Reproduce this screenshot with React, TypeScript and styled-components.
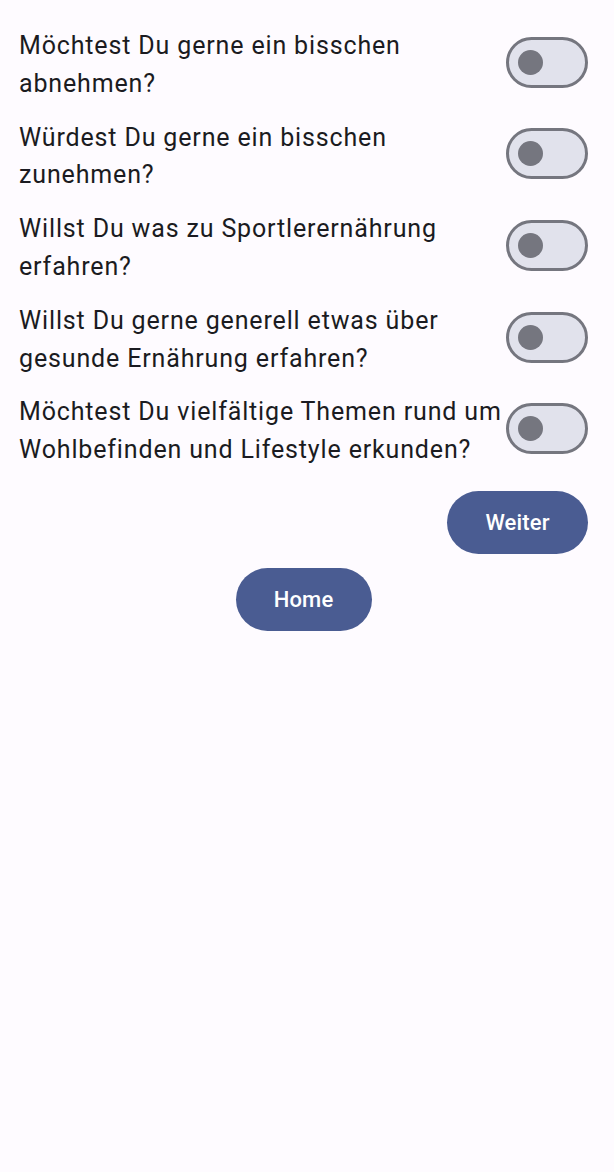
import React, { useState } from "react";
import styled, { createGlobalStyle } from "styled-components";

const Global = createGlobalStyle`
  html, body { margin: 0; padding: 0; background: #fefbff; }
  body { font-family: Roboto, "Noto Sans", sans-serif; }
`;

const Page = styled.div`
  min-height: 1172px;
  background: #fefbff;
  padding: 27px 26px 0 19px;
  box-sizing: border-box;
  display: flex;
  flex-direction: column;
`;

const List = styled.div`
  display: flex;
  flex-direction: column;
  gap: 16px;
`;

const Row = styled.div`
  display: flex;
  align-items: center;
  justify-content: space-between;
`;

const Question = styled.span`
  font-size: 25px;
  line-height: 37.8px;
  letter-spacing: 0.85px;
  color: #1b1b21;
  max-width: 487px;
`;

const Track = styled.button<{ $on: boolean }>`
  flex: none;
  width: 82px;
  height: 51px;
  border-radius: 26px;
  box-sizing: border-box;
  border: 3px solid ${(p) => (p.$on ? "#4a5c92" : "#75767f")};
  background: ${(p) => (p.$on ? "#4a5c92" : "#e1e2ec")};
  padding: 0;
  display: flex;
  align-items: center;
  justify-content: ${(p) => (p.$on ? "flex-end" : "flex-start")};
  cursor: pointer;
  margin-top: -5px;
`;

const Thumb = styled.span<{ $on: boolean }>`
  width: ${(p) => (p.$on ? 38 : 25)}px;
  height: ${(p) => (p.$on ? 38 : 25)}px;
  border-radius: 50%;
  background: ${(p) => (p.$on ? "#ffffff" : "#75767f")};
  margin: 0 ${(p) => (p.$on ? 3 : 9)}px;
`;

const Actions = styled.div`
  display: flex;
  justify-content: flex-end;
  margin-top: 22px;
`;

const Center = styled.div`
  display: flex;
  justify-content: center;
  margin-top: 14px;
`;

const Pill = styled.button<{ $w: number }>`
  width: ${(p) => p.$w}px;
  height: 63px;
  border-radius: 32px;
  border: none;
  background: #4a5c92;
  color: #ffffff;
  font-family: Roboto, "Noto Sans", sans-serif;
  font-size: 22px;
  font-weight: 500;
  letter-spacing: 0.15px;
  padding: 0;
  cursor: pointer;
`;

const questions = [
  "Möchtest Du gerne ein bisschen abnehmen?",
  "Würdest Du gerne ein bisschen zunehmen?",
  "Willst Du was zu Sportlerernährung erfahren?",
  "Willst Du gerne generell etwas über gesunde Ernährung erfahren?",
  "Möchtest Du vielfältige Themen rund um Wohlbefinden und Lifestyle erkunden?",
];

export default function App() {
  const [on, setOn] = useState<boolean[]>(questions.map(() => false));
  return (
    <>
      <Global />
      <Page>
        <List>
          {questions.map((q, i) => (
            <Row key={i}>
              <Question>{q}</Question>
              <Track
                $on={on[i]}
                aria-label={q}
                onClick={() => setOn(on.map((v, j) => (j === i ? !v : v)))}
              >
                <Thumb $on={on[i]} />
              </Track>
            </Row>
          ))}
        </List>
        <Actions>
          <Pill $w={141}>Weiter</Pill>
        </Actions>
        <Center>
          <Pill $w={136}>Home</Pill>
        </Center>
      </Page>
    </>
  );
}
